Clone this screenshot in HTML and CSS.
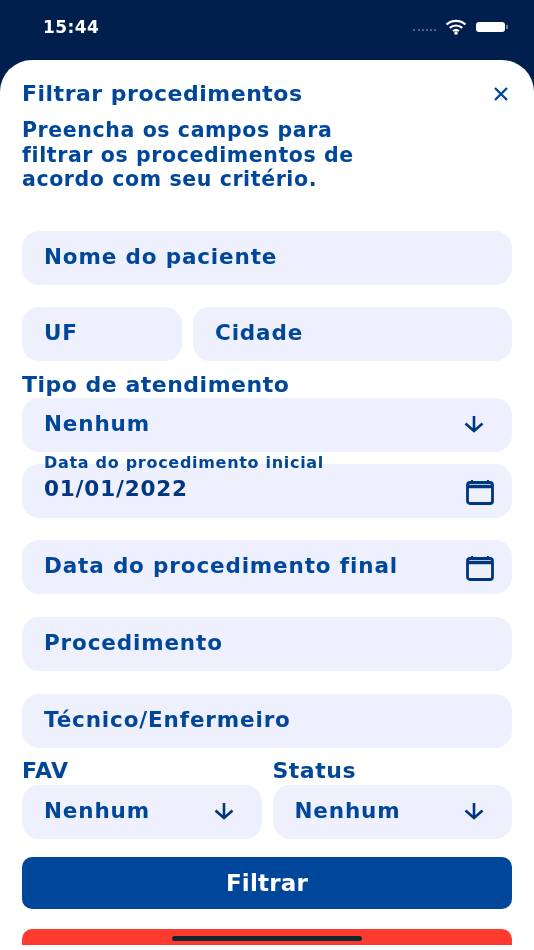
FILE: index.html
```html
<!DOCTYPE html>
<html lang="en">
<head>
    <meta charset="UTF-8">
    <meta name="viewport" content="width=device-width, initial-scale=1.0">
    <title>Filtrar procedimentos</title>
    <link rel="stylesheet" href="styles.css">
</head>
<body>
    <div class="screen">
        <div class="status-bar">
            <span class="time">15:44</span>
            <div class="status-icons">
                <span class="signal"></span>
                <svg class="wifi" width="22" height="16" viewBox="0 0 22 16">
                    <path d="M1.5 5.5C6.8.6 15.2.6 20.5 5.5M4.8 8.9c3.5-3.2 8.9-3.2 12.4 0M8 12c1.700-1.400 4.300-1.400 6 0" fill="none" stroke="#fff" stroke-width="2.200"/>
                    <circle cx="11" cy="14" r="1.800" fill="#fff"/>
                </svg>
                <span class="battery"></span>
            </div>
        </div>

        <div class="sheet">
            <div class="sheet-header">
                <h1>Filtrar procedimentos</h1>
                <svg class="close" width="16" height="16" viewBox="0 0 16 16">
                    <path d="M2 2l12 12M14 2L2 14" stroke="#00479b" stroke-width="2.400" fill="none"/>
                </svg>
            </div>
            <p class="intro">Preencha os campos para<br>filtrar os procedimentos de<br>acordo com seu critério.</p>

            <div class="field first">Nome do paciente</div>

            <div class="row uf-row">
                <div class="field uf">UF</div>
                <div class="field city">Cidade</div>
            </div>

            <label class="label type-label">Tipo de atendimento</label>
            <div class="field">
                <span>Nenhum</span>
                <svg class="arrow" width="22" height="20" viewBox="0 0 22 20"><path d="M11 2v15M2.500 9.500L11 17l8.500-7.500" fill="none" stroke="#00367f" stroke-width="2.600"/></svg>
            </div>

            <div class="field date-start">
                <span class="float-label">Data do procedimento inicial</span>
                <span class="date-value">01/01/2022</span>
                <svg class="calendar" width="28" height="26" viewBox="0 0 28 26"><path d="M6 1v4M22 1v4" stroke="#00367f" stroke-width="2"/><rect x="1.500" y="3.500" width="25" height="21" rx="2.500" fill="none" stroke="#00367f" stroke-width="2.800"/><path d="M1.500 7.500h25" stroke="#00367f" stroke-width="3.500"/></svg>
            </div>

            <div class="field gap-top">
                <span>Data do procedimento final</span>
                <svg class="calendar" width="28" height="26" viewBox="0 0 28 26"><path d="M6 1v4M22 1v4" stroke="#00367f" stroke-width="2"/><rect x="1.500" y="3.500" width="25" height="21" rx="2.500" fill="none" stroke="#00367f" stroke-width="2.800"/><path d="M1.500 7.500h25" stroke="#00367f" stroke-width="3.500"/></svg>
            </div>

            <div class="field gap-top">Procedimento</div>
            <div class="field gap-top">Técnico/Enfermeiro</div>

            <div class="row select-row">
                <div class="col">
                    <label class="label">FAV</label>
                    <div class="field">
                        <span>Nenhum</span>
                        <svg class="arrow" width="22" height="20" viewBox="0 0 22 20"><path d="M11 2v15M2.500 9.500L11 17l8.500-7.500" fill="none" stroke="#00367f" stroke-width="2.600"/></svg>
                    </div>
                </div>
                <div class="col">
                    <label class="label">Status</label>
                    <div class="field">
                        <span>Nenhum</span>
                        <svg class="arrow" width="22" height="20" viewBox="0 0 22 20"><path d="M11 2v15M2.500 9.500L11 17l8.500-7.500" fill="none" stroke="#00367f" stroke-width="2.600"/></svg>
                    </div>
                </div>
            </div>

            <button class="btn-filter">Filtrar</button>
            <div class="btn-clear"></div>
        </div>
        <div class="home-indicator"></div>
    </div>
</body>
</html>
```

FILE: styles.css
```css
* {
    box-sizing: border-box;
}
html, body {
    margin: 0;
    height: 950px;
    background-color: #fff;
    overflow: hidden;
}
body {
    font-family: "DejaVu Sans", "Liberation Sans", sans-serif;
    color: #00479b;
}
.screen {
    position: relative;
    width: 534px;
    height: 945px;
    overflow: hidden;
    background-color: #001f4d;
    filter: blur(0.5px); /* source shot is an upscaled, soft image */
}
.status-bar {
    height: 60px;
    padding: 17px 26px 0 43px;
    display: flex;
    justify-content: space-between;
    align-items: flex-start;
    color: #fff;
}
.time {
    font-size: 17px;
    line-height: 20px;
    font-weight: 700;
    letter-spacing: 0.400px;
}
.status-icons {
    display: flex;
    align-items: center;
    gap: 9px;
    height: 20px;
}
.signal {
    width: 23px;
    border-top: 2px dotted #4a6287;
    margin-top: 6px;
}
.battery {
    position: relative;
    width: 29px;
    height: 10px;
    margin-right: 3px;
    background-color: #fff;
    border-radius: 3px;
}
.battery::after {
    content: "";
    position: absolute;
    right: -3px;
    top: 3px;
    width: 2px;
    height: 4px;
    background-color: #6f829f;
}
.sheet {
    height: 885px;
    background-color: #fff;
    border-radius: 32px 32px 0 0;
    padding: 22px 22px 0;
}
.sheet-header {
    display: flex;
    justify-content: space-between;
    align-items: center;
    padding-right: 3px;
    height: 24px;
}
h1 {
    margin: 0;
    font-size: 22px;
    line-height: 24px;
    font-weight: 700;
    letter-spacing: 0.500px;
}
.intro {
    margin: 12px 0 0;
    font-size: 20.500px;
    line-height: 24.500px;
    font-weight: 700;
    letter-spacing: 0.600px;
}
.field {
    height: 54px;
    background-color: #eff0fd;
    border-radius: 17px;
    padding: 0 22px 2px;
    display: flex;
    align-items: center;
    justify-content: space-between;
    font-size: 21.500px;
    font-weight: 700;
    letter-spacing: 0.850px;
    color: #00479b;
}
.first {
    margin-top: 39px;
}
.row {
    display: flex;
    gap: 11px;
}
.uf-row {
    margin-top: 22px;
}
.uf {
    width: 160px;
}
.city {
    flex: 1;
}
.label {
    display: block;
    font-size: 22px;
    line-height: 24px;
    font-weight: 700;
    letter-spacing: 0.500px;
}
.type-label {
    margin-top: 12px;
    margin-bottom: 1px;
}
.date-start {
    position: relative;
    margin-top: 12px;
}
.float-label {
    position: absolute;
    left: 22px;
    top: -10px;
    font-size: 16px;
    line-height: 18px;
    font-weight: 700;
    letter-spacing: 0.700px;
}
.date-value {
    color: #00367f;
    margin-top: -2px;
}
.gap-top {
    margin-top: 23px;
}
.date-start + .gap-top {
    margin-top: 22px;
}
.arrow {
    margin-right: 5px;
}
.calendar {
    margin-right: -4px;
    margin-top: 5px;
}
.select-row {
    margin-top: 11px;
}
.col {
    flex: 1;
}
.col .label {
    margin-bottom: 2px;
}
.btn-filter {
    display: block;
    width: 100%;
    height: 52px;
    margin-top: 18px;
    border: none;
    border-radius: 10px;
    background-color: #00479b;
    color: #fff;
    font-family: inherit;
    font-size: 23px;
    font-weight: 700;
    letter-spacing: 0.200px;
}
.btn-clear {
    height: 52px;
    margin-top: 20px;
    border-radius: 10px;
    background-color: #ff3b2f;
}
.home-indicator {
    position: absolute;
    left: 172px;
    bottom: 4px;
    width: 190px;
    height: 5px;
    border-radius: 3px;
    background-color: #12282f;
}
```
